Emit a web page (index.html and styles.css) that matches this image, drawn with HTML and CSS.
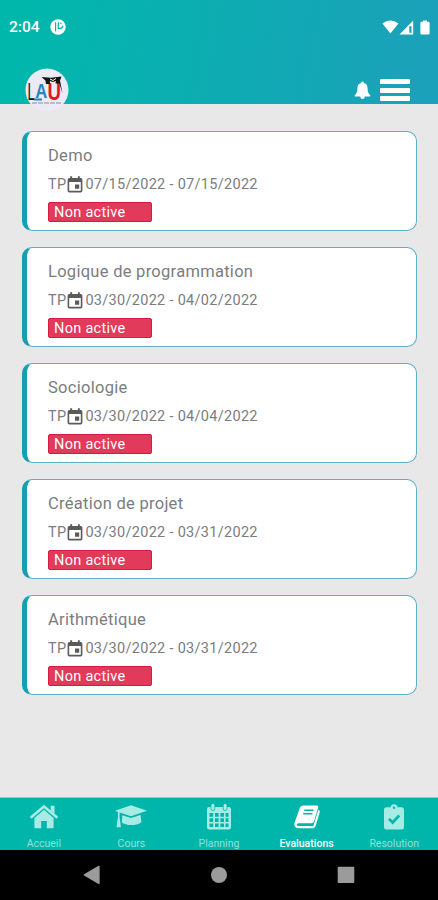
FILE: index.html
```html
<!DOCTYPE html>
<html lang="fr">

<head>
    <meta charset="UTF-8">
    <meta name="viewport" content="width=device-width, initial-scale=1.0">
    <title>Evaluations</title>
    <link rel="stylesheet" href="styles.css">
</head>

<body>
    <header>
        <div class="status-bar">
            <span class="time">2:04</span>
            <svg class="status-app" width="16" height="16" viewBox="0 0 16 16">
                <circle cx="8" cy="8" r="7.7" fill="#fff"/>
                <path d="M5.6 3.2v9.4M8.3 3.2v6.2h1.8a2.6 2.6 0 0 0 2.6-2.6M10.2 4.3h1.3" fill="none" stroke="#08b3ae" stroke-width="1.2"/>
            </svg>
            <div class="status-icons">
                <svg width="17" height="14" viewBox="0 0 17 14"><path d="M.4 3.6Q8.3-2.6 16.4 3.6L8.4 13.6z" fill="#fff"/></svg>
                <svg width="15" height="15" viewBox="0 0 15 15"><path d="M.5 14.4L14.2.6v13.8z" fill="#fff"/><path d="M10.3 6.2h2.2v6.6h-2.2z" fill="#179fb5"/></svg>
                <svg class="battery" width="10" height="15" viewBox="0 0 10 15"><path d="M3 .4h4v1.3h1.6q1 0 1 1v10.7q0 1-1 1H1.4q-1 0-1-1V2.7q0-1 1-1H3z" fill="#fff"/></svg>
            </div>
        </div>
        <div class="top-bar">
            <svg class="logo" width="44" height="44" viewBox="0 0 44 44">
                <circle cx="22" cy="22" r="21.5" fill="#eceaf5"/>
                <text x="2.5" y="32" font-size="23" textLength="7.5" lengthAdjust="spacingAndGlyphs" fill="#111">L</text>
                <text x="10.2" y="29.5" font-size="20" font-weight="bold" textLength="12" lengthAdjust="spacingAndGlyphs" fill="#2583c4">A</text>
                <text x="22.4" y="32" font-size="24" font-weight="bold" textLength="13.5" lengthAdjust="spacingAndGlyphs" fill="#e3151f">U</text>
                <path d="M16.500 9l9.500 .8L36.500 8.500 35 12.500l2.500 13-2.500-8-.5-2h-4l.4-2.500-3 1-3-1v3h-4l-.5-3.500z" fill="#151515"/>
                <path d="M25 11l3 1.500 3-2" fill="none" stroke="#fff" stroke-width="1"/>
                <path d="M9 31.500h8" stroke="#2583c4" stroke-width="2"/>
                <path d="M7 35h29" stroke="#8b8997" stroke-width="1" stroke-dasharray="5 1"/>
            </svg>
            <svg class="bell" width="17" height="19" viewBox="0 0 17 19">
                <path d="M8.500 .5q1.300 0 1.400 1.400c2.500.6 3.700 2.600 3.700 5.300 0 4 .9 5.200 2.500 6.700.6.700.2 1.700-.7 1.700H1.600c-.9 0-1.300-1-.7-1.700 1.600-1.500 2.500-2.700 2.500-6.700 0-2.700 1.200-4.700 3.700-5.300Q7.200.5 8.500.5zM6.300 15.400h4.400a2.200 2.600 0 0 1-4.400 0z" fill="#fff"/>
            </svg>
            <div class="menu">
                <span></span>
                <span></span>
                <span></span>
            </div>
        </div>
    </header>

    <svg class="defs">
        <symbol id="event" viewBox="0 0 16 17">
            <path d="M3.200 .3h1.900V2h5.800V.3h1.900V2h.9Q15.400 2 15.400 3.700v11q0 1.700-1.700 1.700H2.300Q.6 16.400.6 14.700v-11Q.6 2 2.300 2h.9zM2.200 6.100v8.700h11.600V6.100zM8 8.600h4.200v4.200H8z"/>
        </symbol>
    </svg>

    <main>
        <div class="card">
            <h2>Demo</h2>
            <p class="date">TP<svg><use href="#event"/></svg>07/15/2022 - 07/15/2022</p>
            <span class="badge">Non active</span>
        </div>
        <div class="card">
            <h2>Logique de programmation</h2>
            <p class="date">TP<svg><use href="#event"/></svg>03/30/2022 - 04/02/2022</p>
            <span class="badge">Non active</span>
        </div>
        <div class="card">
            <h2>Sociologie</h2>
            <p class="date">TP<svg><use href="#event"/></svg>03/30/2022 - 04/04/2022</p>
            <span class="badge">Non active</span>
        </div>
        <div class="card">
            <h2>Création de projet</h2>
            <p class="date">TP<svg><use href="#event"/></svg>03/30/2022 - 03/31/2022</p>
            <span class="badge">Non active</span>
        </div>
        <div class="card">
            <h2>Arithmétique</h2>
            <p class="date">TP<svg><use href="#event"/></svg>03/30/2022 - 03/31/2022</p>
            <span class="badge">Non active</span>
        </div>
    </main>

    <nav class="tabs">
        <div class="tab">
            <svg width="34" height="28" viewBox="0 0 34 28">
                <path d="M17 6.800l9.600 8.100v9.400q0 1-1 1h-5.800v-7.200h-5.600v7.200H8.400q-1 0-1-1v-9.400z"/>
                <path d="M3.600 14.800L17 3.500l13.400 11.300" fill="none" stroke="#a6ece5" stroke-width="2.600"/>
                <path d="M23.700 2.800h3.800v8l-3.800-3.200z"/>
            </svg>
            <span>Accueil</span>
        </div>
        <div class="tab">
            <svg width="34" height="28" viewBox="0 0 34 28">
                <path d="M17 2.300L33 7.700 17 13.200 5.600 9.600v4.700l1.300 10H2.600l1.300-10V9L1 7.700z"/>
                <path d="M8.300 12.200L17 15.100l9.600-3.100.8 7.200q-3.500 2.800-10 2.800-6.300 0-9.600-2.800z"/>
            </svg>
            <span>Cours</span>
        </div>
        <div class="tab">
            <svg width="34" height="28" viewBox="0 0 34 28">
                <path fill-rule="evenodd" d="M7.200 4h19.600Q29 4 29 6.200v18Q29 26.500 26.800 26.500H7.200Q5 26.500 5 24.200v-18Q5 4 7.200 4zM7.500 10v3.700h3.700V10zM13 10v3.700h3.600V10zM18.400 10v3.700H22V10zM23.500 10v3.700h3V10zM7.500 15.300v3.600h3.700v-3.600zM13 15.300v3.600h3.600v-3.600zM18.400 15.300v3.600H22v-3.600zM23.500 15.300v3.600h3v-3.600zM7.500 20.500v3.600h3.700v-3.600zM13 20.500v3.600h3.600v-3.600zM18.400 20.500v3.600H22v-3.600zM23.500 20.500v3.600h3v-3.600z"/>
                <g fill="#a6ece5" stroke="#00b5aa" stroke-width=".8">
                    <rect x="9" y=".4" width="3.800" height="7.200" rx="1.900"/>
                    <rect x="21.200" y=".4" width="3.800" height="7.200" rx="1.900"/>
                </g>
            </svg>
            <span>Planning</span>
        </div>
        <div class="tab active">
            <svg width="34" height="28" viewBox="0 0 34 28">
                <path d="M13 2.500h13.500q2.300 0 1.600 2.300L24 18.500q-.6 1.700-2.500 1.700H8.600q-2 .2-2 1.500 0 1.300 2 1.300h13.800q1 0 1.400-1.200l4.500-15q2 .7 1.400 2.700l-4.100 13.400q-.7 2.300-3 2.300H8.200q-4.500-.5-3.800-5L9.800 5Q10.600 2.700 13 2.500z"/>
                <path d="M14.300 7.200h9.200M13.200 10.800h9.200" stroke="#00b5aa" stroke-width="1.400"/>
            </svg>
            <span>Evaluations</span>
        </div>
        <div class="tab">
            <svg width="34" height="28" viewBox="0 0 34 28">
                <path d="M9.500 4.200h4Q14 1.300 17 1.300t3.500 2.900h4q2.500 0 2.500 2.500v17.500q0 2.400-2.500 2.400h-15Q7 26.600 7 24.200V6.700q0-2.500 2.500-2.500z"/>
                <circle cx="17" cy="4.700" r="1.200" fill="#00b5aa"/>
                <path d="M12 15.800l3.600 3.700 6.600-7" fill="none" stroke="#00b5aa" stroke-width="2.600"/>
            </svg>
            <span>Resolution</span>
        </div>
    </nav>

    <footer class="android-nav">
        <svg width="18" height="20" viewBox="0 0 18 20"><path d="M15.900 1.500v16.800L1.400 9.900z" stroke="#9b9b9b" stroke-width="1.500" stroke-linejoin="round"/></svg>
        <svg width="18" height="20" viewBox="0 0 18 20"><circle cx="9" cy="10" r="8"/></svg>
        <svg width="18" height="20" viewBox="0 0 18 20"><rect x=".7" y="1.700" width="16.600" height="16.400" rx="1"/></svg>
    </footer>
</body>

</html>
```

FILE: styles.css
```css
* {
    margin: 0;
    padding: 0;
    box-sizing: border-box;
}

body {
    font-family: Roboto, "Liberation Sans", sans-serif;
    background-color: #e8e8e8;
    height: 900px;
    display: flex;
    flex-direction: column;
    overflow: hidden;
}

svg {
    display: block;
    flex: none;
}

header {
    height: 104px;
    background: linear-gradient(100deg, #00b7ab 5%, #1ba1b9 95%);
}

.status-bar {
    height: 54px;
    padding: 0 8px 0 9px;
    display: flex;
    align-items: center;
    color: #fff;
}

.time {
    font-size: 15.5px;
    font-weight: 500;
    width: 41px;
}

.status-icons {
    margin-left: auto;
    display: flex;
    align-items: center;
}

.battery {
    margin-left: 6px;
}

.top-bar {
    height: 50px;
    padding: 14px 28px 0 25px;
    display: flex;
    align-items: flex-start;
}

.logo {
    font-family: "Liberation Sans", sans-serif;
}

.bell {
    margin: 13px 9px 0 auto;
}

.menu {
    width: 30px;
    margin-top: 11px;
    display: flex;
    flex-direction: column;
    gap: 3.5px;
}

.menu span {
    height: 5px;
    border-radius: 1px;
    background: #fff;
}

.defs {
    display: none;
}

main {
    flex: 1;
    padding: 27px 21px 0 22px;
    display: flex;
    flex-direction: column;
    gap: 16px;
}

.card {
    height: 100px;
    padding: 14px 20px 0 21px;
    background: #fff;
    border: 1px solid #5fb0c2;
    border-left: 5px solid #149fb4;
    border-radius: 10px;
    color: #7a7d80;
}

.card h2 {
    font-size: 16.5px;
    line-height: 20px;
    font-weight: 400;
    letter-spacing: 0.28px;
}

.date {
    display: flex;
    align-items: center;
    height: 20px;
    margin-top: 8px;
    font-size: 14.5px;
    letter-spacing: 0.3px;
    white-space: nowrap;
}

.date svg {
    width: 16px;
    height: 17px;
    margin: 0 2px 0 1px;
    fill: #5b5b5b;
}

.badge {
    display: block;
    width: 104px;
    height: 20px;
    margin-top: 8px;
    padding-left: 5px;
    border: 1px solid #d9193f;
    border-radius: 2px;
    background: #e23a5b;
    color: #fff;
    font-size: 14.5px;
    line-height: 20px;
    letter-spacing: 0.3px;
}

.tabs {
    height: 53px;
    display: flex;
    border-top: 1px solid #8ccdc8;
    background: #00b5aa;
}

.tab {
    flex: 1;
    display: flex;
    flex-direction: column;
    align-items: center;
    padding-top: 5px;
    font-size: 10.5px;
    line-height: 12px;
    color: #8ee3db;
    fill: #a6ece5;
}

.tab span {
    margin-top: 7px;
}

.tab.active {
    color: #fff;
    fill: #fff;
}

.tab.active span {
    font-weight: 500;
}

.android-nav {
    height: 50px;
    display: flex;
    justify-content: center;
    align-items: center;
    gap: 109px;
    background: #000;
    fill: #9b9b9b;
}
```
